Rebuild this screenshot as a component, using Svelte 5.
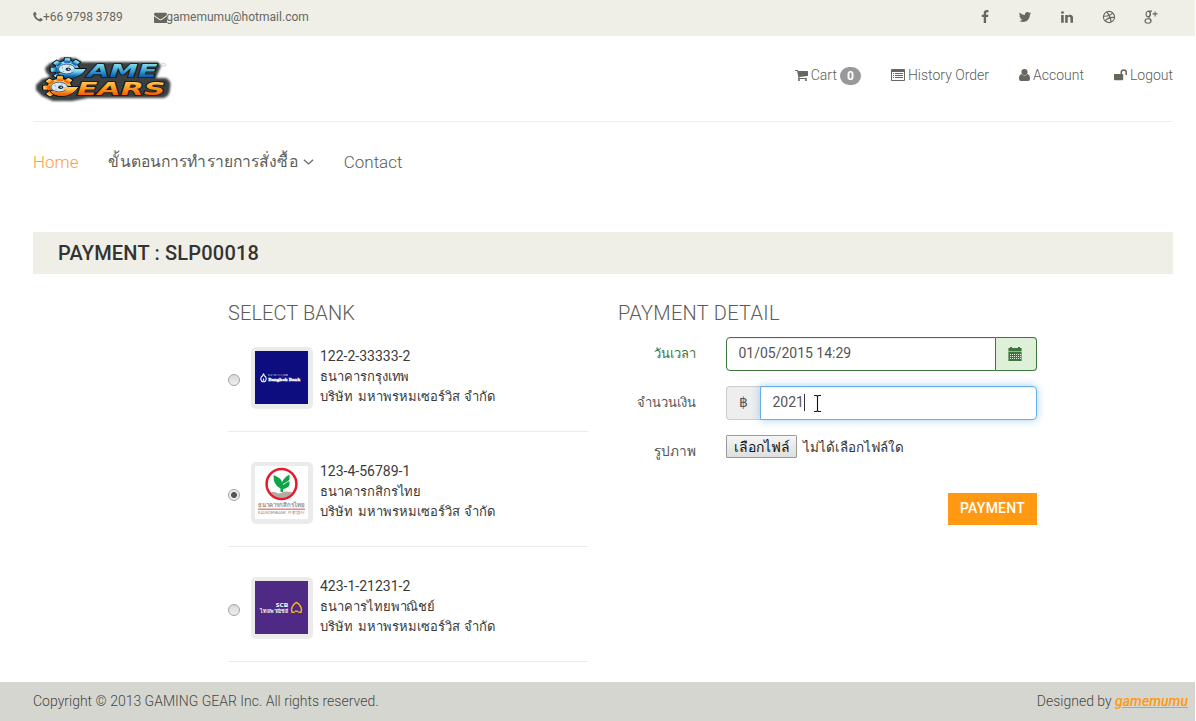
<script>
  const banks = [
    { id: 'bbl', number: '122-2-33333-2', name: 'ธนาคารกรุงเทพ' },
    { id: 'kbank', number: '123-4-56789-1', name: 'ธนาคารกสิกรไทย' },
    { id: 'scb', number: '423-1-21231-2', name: 'ธนาคารไทยพาณิชย์' }
  ];
  let selected = $state('kbank');
  const teeth = [2, -48, -92, -135, 42];
</script>

{#snippet gear(x, y, fill)}
  <g transform="translate({x} {y})">
    {#each teeth as a}
      <path d="M-2.700-8 L-2.200-12.400 H2.200 L2.700-8Z" transform="scale(1.35 .92) rotate({a})" {fill} stroke="#0c1218" stroke-width="1.200" />
    {/each}
    <ellipse rx="12.500" ry="8.800" {fill} stroke="#0c1218" stroke-width="1.200" />
    {#each teeth as a}
      <path d="M-2.400-7 L-2-12 H2 L2.400-7Z" transform="scale(1.35 .92) rotate({a})" {fill} />
    {/each}
    <path d="M-10 3 Q-6 9.600 3 9.200 Q14 8.400 19.500-.8 H5 L3 3Z" {fill} stroke="#0c1218" stroke-width="1" />
    <ellipse cx="-.3" cy="-.3" rx="8.300" ry="4.900" fill="#d4e9f7" stroke="#2e4a5c" stroke-width=".8" />
    <ellipse cx="1.200" cy="0" rx="2.500" ry="1.800" fill="#17252f" />
    <ellipse cx="1.600" cy="-.1" rx="1" ry=".7" fill="#b9d6e6" />
    <circle cx="-4.500" cy="-1.500" r=".7" fill="#7fa3bb" />
    <circle cx="-3.500" cy="2.300" r=".7" fill="#7fa3bb" />
    <circle cx="2.500" cy="-3.300" r=".7" fill="#7fa3bb" />
    <path d="M4.500 -.2 H18.500 Q13 8.300 3 8.700 Q-5 8.500-9 3.500 Q-3 6.500 4 4.800 Q7 4 8 2.500 H3.500Z" {fill} />
  </g>
{/snippet}

<div class="page">
  <div class="topbar">
    <div class="contact">
      <span class="item phone"><svg width="10" height="12" viewBox="150 128 1500 1500"><path d="M1600 1240q0 27-10 70.5t-21 68.5q-21 50-122 106-94 51-186 51-27 0-53-3.5t-57.5-12.5-47-14.5-55.5-20.5-49-18q-98-35-175-83-127-79-264-216t-216-264q-48-77-83-175-3-9-18-49t-20.5-55.5-14.5-47-12.5-57.5-3.5-53q0-92 51-186 56-101 106-122 25-11 68.5-21t70.5-10q14 0 21 3 18 6 53 76 11 19 30 54t35 63.5 31 53.5q3 4 17.5 25t21.5 35.5 7 28.5q0 20-28.5 50t-62 55-62 53-28.5 46q0 9 5 22.5t8.5 20.5 14 24 11.5 19q76 137 174 235t235 174q2 1 19 11.5t24 14 20.5 8.5 22.5 5q18 0 46-28.5t53-62 55-62 50-28.5q14 0 28.5 7t35.5 21.5 25 17.5q25 15 53.5 31t63.5 35 54 30q70 35 76 53 3 7 3 21z" /></svg><span>+66 9798 3789</span></span>
      <span class="item"><svg width="13" height="13" viewBox="0 0 1792 1792"><path d="M1792 710v794q0 66-47 113t-113 47h-1472q-66 0-113-47t-47-113v-794q44 49 101 87 362 246 497 345 57 42 92.5 65.5t94.5 48 110 24.5h2q51 0 110-24.5t94.5-48 92.5-65.5q170-123 498-345 57-39 100-87zm0-294q0 79-49 151t-122 123q-376 261-468 325-10 7-42.5 31t-54 38.5-52 32.5-57.5 27-50 9h-2q-23 0-50-9t-57.5-27-52-32.5-54-38.5-42.5-31q-91-64-262-182.5t-205-142.5q-62-42-117-115.5t-55-136.5q0-78 41.5-130t118.5-52h1472q65 0 112.5 47t47.5 113z" /></svg><span class="mail">gamemumu@hotmail.com</span></span>
    </div>
    <div class="social">
      <svg viewBox="0 0 1792 1792"><path d="M1343 12v264h-157q-86 0-116 36t-30 108v189h293l-39 296h-254v759h-306v-759h-255v-296h255v-218q0-186 104-288.5t277-102.5q147 0 228 12z" /></svg>
      <svg viewBox="0 0 1792 1792"><path d="M1684 408q-67 98-162 167 1 14 1 42 0 130-38 259.5t-115.5 248.5-184.5 210.5-258 146-323 54.5q-271 0-496-145 35 4 78 4 225 0 401-138-105-2-188-64.5t-114-159.5q33 5 61 5 43 0 85-11-112-23-185.5-111.5t-73.5-205.5v-4q68 38 146 41-66-44-105-115t-39-154q0-88 44-163 121 149 294.5 238.5t371.5 99.5q-8-38-8-74 0-134 94.5-228.5t228.5-94.5q140 0 236 102 109-21 205-78-37 115-142 178 93-10 186-50z" /></svg>
      <svg viewBox="0 0 1792 1792"><path d="M477 625v991h-330v-991h330zm21-306q1 73-50.5 122t-135.5 49h-2q-82 0-132-49t-50-122q0-74 51.5-122.5t134.5-48.5 133 48.5 51 122.5zm1166 729v568h-329v-530q0-105-40.5-164.5t-126.5-59.5q-63 0-105.5 34.5t-63.5 85.5q-11 30-11 81v553h-329q2-399 2-647t-1-296l-1-48h329v144h-2q20-32 41-56t56.5-52 87-43.5 114.5-15.5q171 0 275 113.5t104 332.5z" /></svg>
      <svg viewBox="0 0 14 14" class="line"><circle cx="7" cy="7" r="5.600" /><path d="M1.500 6.200 Q7.500 6.600 10.800 2.900 M4.800 1.900 Q8.600 6.500 9.200 12.100 M3.200 11.200 Q6 6.600 12.600 7.500" /></svg>
      <svg viewBox="0 0 14 14" class="line"><ellipse cx="4.200" cy="4" rx="2.100" ry="2.800" /><ellipse cx="4" cy="11" rx="3" ry="2.200" /><path d="M4.300 1.100 H8 M5.300 1.300 Q7 2.800 6.200 5 L4.800 6.800 Q4.600 7.600 5.600 8.400 Q7.300 9.500 6.900 11 M8.600 3.900 H13.600 M11.100 1.500 V6.400" /></svg>
    </div>
  </div>

  <header>
    <svg class="logo" width="142" height="50" viewBox="32 54 142 50">
      <defs>
        <linearGradient id="blue" x1="0" y1="0" x2="0" y2="1"><stop offset=".2" stop-color="#8bdcea" /><stop offset=".5" stop-color="#45a9d5" /><stop offset=".8" stop-color="#0b62b6" /></linearGradient>
        <linearGradient id="orange" x1="0" y1="0" x2="0" y2="1"><stop offset=".2" stop-color="#ffc957" /><stop offset=".5" stop-color="#fd9a1e" /><stop offset=".8" stop-color="#f56305" /></linearGradient>
        <filter id="soft" x="-10%" y="-20%" width="120%" height="140%"><feGaussianBlur stdDeviation=".9" /></filter>
      </defs>
      <path filter="url(#soft)" fill="#3b3f42" d="M50 63 L57 62 L61 58 H75 L82 62 H158 L161 66 L156 78 H166 Q172 81 170 88 Q170 97 163 98 H88 L72 101 H53 L42 96 L36 90 V85 L42 79 L50 77 L46 72 L45 68Z" />
      {@render gear(67, 69.300, 'url(#blue)')}
      {@render gear(59.500, 87.300, 'url(#orange)')}
      <g class="wordmark">
        <text x="87.500" y="76.500" textLength="70" lengthAdjust="spacingAndGlyphs" fill="url(#blue)">AME</text>
        <text x="77" y="94.500" textLength="88.500" lengthAdjust="spacingAndGlyphs" fill="url(#orange)">EARS</text>
      </g>
      <ellipse cx="163.500" cy="64.800" rx="2.600" ry="1.200" fill="none" stroke="#c4c4c4" stroke-width=".8" />
    </svg>
    <nav class="account">
      <a><svg width="13" height="14" viewBox="64 0 1664 1792"><path d="M704 1536q0 52-38 90t-90 38-90-38-38-90 38-90 90-38 90 38 38 90zm896 0q0 52-38 90t-90 38-90-38-38-90 38-90 90-38 90 38 38 90zm128-1088v512q0 24-16.5 42.5t-40.5 21.5l-1044 122q13 60 13 70 0 16-24 64h920q26 0 45 19t19 45-19 45-45 19h-1024q-26 0-45-19t-19-45q0-11 8-31.5t16-36 21.5-40 15.5-29.5l-177-823h-204q-26 0-45-19t-19-45 19-45 45-19h256q16 0 28.5 6.5t19.5 15.5 13 24.5 8 26 5.5 29.5 4.5 26h1201q26 0 45 19t19 45z" /></svg><span>Cart</span><b>0</b></a>
      <a><svg width="14" height="14" viewBox="0 0 14 14"><path fill-rule="evenodd" d="M1 1H13Q14 1 14 2V12Q14 13 13 13H1Q0 13 0 12V2Q0 1 1 1ZM1 4V12H13V4ZM2 5H3V6H2ZM4 5H12V6H4ZM2 7H3V8H2ZM4 7H12V8H4ZM2 9H3V10H2ZM4 9H12V10H4Z" /></svg><span>History Order</span></a>
      <a><svg width="11" height="14" viewBox="0 0 11 14"><circle cx="5.500" cy="4" r="3.100" /><path d="M2.600 6Q5.500 9 8.400 6Q11 6.500 11 10.800Q11 13 9 13H2Q0 13 0 10.800Q0 6.500 2.600 6Z" /></svg><span>Account</span></a>
      <a><svg width="13" height="14" viewBox="0 0 13 14"><path d="M.8 6H6.500V4.500A3.250 3.250 0 0 1 13 4.500V6.500Q13 7 12.500 7H12Q11.500 7 11.500 6.500V4.500A1.750 1.750 0 0 0 8 4.500V6H8.500Q9.200 6 9.200 6.800V11.500Q9.200 12.300 8.400 12.300H.8Q0 12.300 0 11.500V6.800Q0 6 .8 6Z" /></svg><span>Logout</span></a>
    </nav>
  </header>

  <nav class="menu">
    <a class="home">Home</a>
    <a class="steps"><span>ขั้นตอนการทำรายการสั่งซื้อ</span><svg width="11" height="8" viewBox="0 0 11 8"><path d="M.9 1.700 5.500 6 10.100 1.700" /></svg></a>
    <a>Contact</a>
  </nav>

  <h1>PAYMENT : SLP00018</h1>

  <main>
    <section class="banks">
      <h2>SELECT BANK</h2>
      {#each banks as bank}
        <label class="bank">
          <input type="radio" name="bank" value={bank.id} bind:group={selected} />
          <span class="thumb">
            {#if bank.id === 'bbl'}
              <svg viewBox="0 0 53 53"><rect width="53" height="53" fill="#0d0d80" /><path d="M8.500 22.500 Q8.200 24.500 6.300 26 Q5 28 6.500 30 Q8.500 31.600 10.500 30 Q12 28 10.700 26 Q8.800 24.500 8.500 22.500Z" fill="none" stroke="#fff" stroke-width="1.100" /><path d="M8.500 27 L7.600 29 L8.500 30 L9.400 29Z" fill="#fff" /><text x="13.200" y="25" textLength="20" lengthAdjust="spacingAndGlyphs" class="bbl-th">ธนาคารกรุงเทพ</text><text x="13.200" y="30" textLength="32" lengthAdjust="spacingAndGlyphs" class="bbl-en">Bangkok Bank</text></svg>
            {:else if bank.id === 'kbank'}
              <svg viewBox="0 0 53 53"><rect width="53" height="53" fill="#fff" /><clipPath id="disc"><circle cx="26.500" cy="18" r="13.700" /></clipPath><path clip-path="url(#disc)" d="M11 28 Q17 24 22 27 Q25 28 27 26.500 Q32 24 42 28 V34 H11Z" fill="#b3aaa2" /><path d="M18.500 9 Q27 12 27 17 Q28 12 34.500 8.500 V13.500 Q33 15.500 28 18 V19 Q31 17 34.500 15 V19 Q33 22 28 23 V26 H25.500 V22.500 Q18 19 18.500 9Z" fill="#0fa34a" /><circle cx="26.500" cy="18" r="14.900" fill="none" stroke="#e31b2c" stroke-width="2.500" /><text x="3" y="41.200" textLength="47" lengthAdjust="spacingAndGlyphs" class="kb-th">ธนาคารกสิกรไทย</text><rect x="3" y="42.600" width="47" height="1.200" fill="#e4666c" /><text x="3" y="48" textLength="28" lengthAdjust="spacingAndGlyphs" class="kb-en">KASIKORNBANK</text><text x="32.500" y="48" textLength="17" lengthAdjust="spacingAndGlyphs" class="kb-en">开泰银行</text></svg>
            {:else}
              <svg viewBox="0 0 53 53"><rect width="53" height="53" fill="#4e2a84" /><text x="20.800" y="26" textLength="12.500" lengthAdjust="spacingAndGlyphs" class="scb-en">SCB</text><text x="5" y="32" textLength="28" lengthAdjust="spacingAndGlyphs" class="scb-th">ไทยพาณิชย์</text><path d="M39.800 31.200H37L36.500 28.500Q37.500 23.500 41.500 21.500Q45.500 23.500 46.500 28.500L46 31.200H43.200M40 30.300H43" fill="none" stroke="#f6b01a" stroke-width="1.400" /></svg>
            {/if}
          </span>
          <span class="info"><span class="num">{bank.number}</span><span class="name">{bank.name}</span><span class="thai">บริษัท มหาพรหมเซอร์วิส จำกัด</span></span>
        </label>
      {/each}
    </section>

    <section class="detail">
      <h2>PAYMENT DETAIL</h2>
      <div class="row success">
        <span class="lbl">วันเวลา</span>
        <div class="group"><div class="control">01/05/2015 14:29</div><div class="addon cal"><svg width="14" height="14" viewBox="0 0 14 14"><path fill-rule="evenodd" d="M2 0H4V1H10V0H12V1H13.600V4H.4V1H2ZM.4 5H13.600V14H.4ZM2 7V8H3V7ZM4 7V8H5V7ZM6 7V8H7V7ZM8 7V8H9V7ZM10 7V8H11V7ZM12 7V8H13V7ZM2 9V10H3V9ZM4 9V10H5V9ZM6 9V10H7V9ZM8 9V10H9V9ZM10 9V10H11V9ZM12 9V10H13V9ZM2 11V12H3V11ZM4 11V12H5V11ZM6 11V12H7V11ZM8 11V12H9V11ZM10 11V12H11V11ZM12 11V12H13V11Z" /><path d="M.4 4H13.600V5H.4Z" opacity=".45" /></svg></div></div>
      </div>
      <div class="row">
        <span class="lbl">จำนวนเงิน</span>
        <div class="group"><div class="addon baht">฿</div><div class="control focus"><span>2021</span><i></i><svg class="pointer" width="9" height="17" viewBox="0 0 9 17"><path d="M1 .5H3.500Q4.500 .8 4.500 2V15Q4.500 16.200 3.500 16.500H1M8 .5H5.500Q4.500 .8 4.500 2M8 16.500H5.500Q4.500 16.200 4.500 15" /></svg></div></div>
      </div>
      <div class="row">
        <span class="lbl image">รูปภาพ</span>
        <div class="filebox"><button>เลือกไฟล์</button><span>ไม่ได้เลือกไฟล์ใด</span></div>
      </div>
      <button class="pay">PAYMENT</button>
    </section>
  </main>

  <footer>
    <span>Copyright © 2013 GAMING GEAR Inc. All rights reserved.</span>
    <span>Designed by <a>gamemumu</a></span>
  </footer>
</div>

<style>
  :global(body) { margin: 0; background: #fff; overflow: hidden; }
  * { box-sizing: border-box; }
  .page { width: 1195px; height: 721px; display: flex; flex-direction: column; font-family: Roboto, "Noto Sans", sans-serif; font-size: 14px; color: #333; overflow: hidden; }
  svg { display: block; flex: none; }
  .topbar { height: 36px; background: #f0efe7; display: flex; justify-content: space-between; padding: 0 37px 0 33px; color: #67675f; font-size: 12px; }
  .topbar svg, .account svg { fill: #67675f; }
  .contact, .item { display: flex; align-items: center; }
  .contact { height: 34px; gap: 31px; }
  .phone { letter-spacing: -.04px; }
  .mail { letter-spacing: .02px; margin-left: -.5px; }
  .social { display: flex; gap: 27.700px; height: 34px; align-items: center; }
  .social svg { width: 14px; height: 14px; }
  .social svg:nth-child(1) { margin: 0 -2px 0 0; }
  .social svg:nth-child(3) { margin-right: 1px; }
  .social .line { fill: none; stroke: #67675f; stroke-width: 1.100; }
  header { height: 86px; margin: 0 22px 0 33px; border-bottom: 1px solid #f0f0ee; display: flex; justify-content: space-between; }
  .logo { margin: 18px 0 0 -1px; }
  .wordmark { font: bold italic 18.500px "DejaVu Sans", sans-serif; stroke: #10161b; stroke-width: 1.600px; paint-order: stroke; }
  .account { display: flex; gap: 30px; height: 78px; align-items: center; font-weight: 300; color: #5c5c56; }
  .account a { display: flex; align-items: center; gap: 3px; }
  .account b { background: #999; color: #fff; border-radius: 10px; width: 21px; height: 18px; font-size: 12px; font-weight: 700; line-height: 18px; text-align: center; position: relative; top: 1px; }
  .menu { height: 110px; padding: 26px 0 0 33px; display: flex; gap: 30px; font-size: 17px; line-height: 28px; font-weight: 300; color: #5c5c56; }
  .home { color: #ff9c3a; }
  .steps { display: flex; align-items: center; height: 28px; gap: 5px; }
  .steps span { font-size: 15.650px; letter-spacing: .12px; font-weight: 400; white-space: nowrap; }
  .steps svg { fill: none; stroke: #67675f; stroke-width: 1.200; }
  h1 { margin: 0 22px 0 33px; height: 42px; padding-left: 25px; background: #f0efe7; font-size: 20px; line-height: 42px; font-weight: 500; letter-spacing: .18px; color: #333; }
  main { display: flex; gap: 30px; padding-left: 228px; height: 408px; }
  .banks { width: 360px; }
  h2 { margin: 0; padding-top: 27px; height: 63px; font-size: 20px; line-height: 24px; font-weight: 300; color: #5c5c56; letter-spacing: .1px; }
  .detail h2 { letter-spacing: .28px; }
  .bank { height: 115px; border-bottom: 1px solid #ebebeb; display: flex; padding-top: 30px; }
  .bank:first-of-type { height: 95px; padding-top: 10px; }
  input { appearance: none; width: 12px; height: 12px; margin: 27px 11px 0 0; border: 1px solid #a5a5a5; border-radius: 50%; background: linear-gradient(#d9d9d9, #eee); }
  input:checked { background: radial-gradient(circle, #555 0 2.600px, #ececec 3.400px); }
  .thumb { width: 62px; height: 62px; border: 4px solid #ebebeb; border-radius: 5px; background: #ebebeb; margin-right: 7px; }
  .thumb svg { width: 53px; height: 53px; }
  .info { display: flex; flex-direction: column; margin-top: -1px; white-space: nowrap; color: #3a3a3a; }
  .num { line-height: 20px; }
  .name { font-size: 13px; letter-spacing: -.05px; line-height: 22px; }
  .thai { font-size: 13px; word-spacing: 1.500px; line-height: 18px; }
  .bbl-th { font: 3px "Noto Sans", sans-serif; fill: #ccd; }
  .bbl-en { font: bold 5px "Liberation Serif", serif; fill: #fff; stroke: #fff; stroke-width: .3; }
  .kb-th { font: bold 6px "Noto Sans", sans-serif; fill: #9a8d80; }
  .kb-en { font: 3.500px Roboto, "Noto Sans CJK SC", sans-serif; fill: #9a8d80; }
  .scb-en { font: bold 6px "Noto Sans", sans-serif; fill: #fff; }
  .scb-th { font: bold 5.500px "Noto Sans", sans-serif; fill: #eee; }
  .detail { width: 419px; display: flex; flex-direction: column; }
  .row { display: flex; height: 34px; margin-bottom: 15px; color: #555; }
  .lbl { width: 78px; margin-right: 30px; text-align: right; line-height: 33px; white-space: nowrap; font-size: 12.900px; }
  .image { font-size: 13.700px; }
  .success .lbl { color: #3c763d; }
  .group { display: flex; width: 311px; }
  .control { flex: 1; border: 1px solid #3c763d; border-radius: 4px 0 0 4px; padding: 0 11.400px 2px; color: #555; display: flex; align-items: center; box-shadow: inset 0 1px 1px #00000013; }
  .addon { border: 1px solid #ccc; background: #eee; display: flex; align-items: center; justify-content: center; }
  .cal { width: 41px; border-color: #3c763d; border-left: 0; background: #dff0d8; border-radius: 0 4px 4px 0; fill: #3c763d; padding-right: 2px; }
  .baht { width: 34px; border-right: 0; border-radius: 4px 0 0 4px; font-size: 14px; padding: 0 1px 2px 0; }
  .focus { border-color: #66afe9; border-radius: 0 4px 4px 0; box-shadow: inset 0 1px 1px #00000013, 0 0 8px #66afe999; }
  .focus i { width: 1px; height: 17px; background: #333; }
  .pointer { margin: 2px 0 0 8.600px; fill: none; stroke: #111; stroke-width: 1.100; }
  .filebox { display: flex; align-items: center; height: 23px; gap: 6px; color: #333; white-space: nowrap; font-size: 13.400px; }
  .filebox span { padding-top: 1px; }
  .filebox button { width: 71px; height: 23px; padding: 0; border: 1px solid #999; border-radius: 1px; background: linear-gradient(#f6f6f6, #dedede); font: 13.900px Roboto, "Noto Sans", sans-serif; color: #111; }
  .pay { align-self: flex-end; margin-top: 9px; width: 89px; height: 32px; border: 0; padding: 0 0 2px; background: #ff9912; color: #fff; font: 500 14px Roboto, sans-serif; letter-spacing: .25px; }
  footer { height: 39px; flex: none; background: #d5d6cf; display: flex; justify-content: space-between; padding: 0 7px 0 33px; line-height: 39px; font-weight: 300; color: #484844; }
  footer a { color: #ff9912; font-weight: 500; font-style: italic; text-decoration: underline; }
</style>
